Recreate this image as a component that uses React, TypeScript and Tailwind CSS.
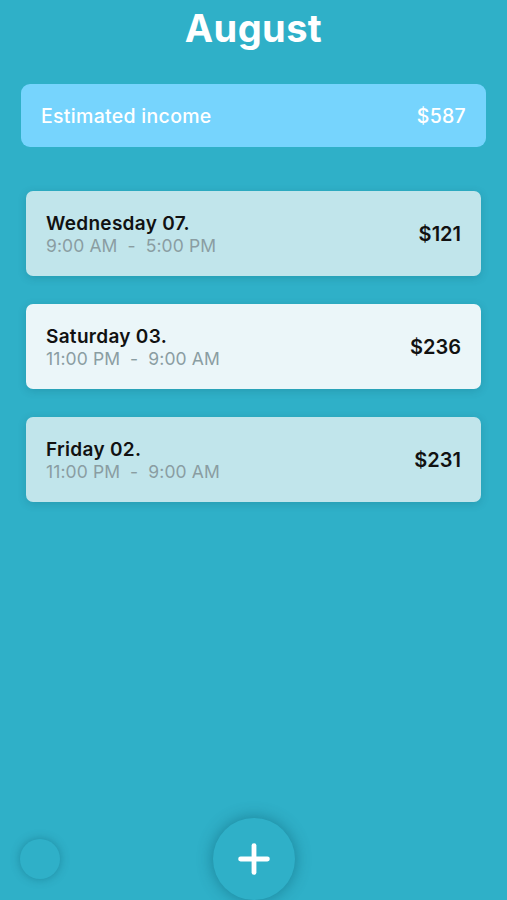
import { Plus } from "lucide-react";

type Shift = {
  id: number;
  day: string;
  start: string;
  end: string;
  amount: number;
  active?: boolean;
};

const shifts: Shift[] = [
  { id: 1, day: "Wednesday 07.", start: "9:00 AM", end: "5:00 PM", amount: 121 },
  { id: 2, day: "Saturday 03.", start: "11:00 PM", end: "9:00 AM", amount: 236, active: true },
  { id: 3, day: "Friday 02.", start: "11:00 PM", end: "9:00 AM", amount: 231 },
];

export default function App() {
  return (
    <div
      className="relative h-[900px] w-full overflow-hidden bg-[#2fb0c8]"
      style={{ fontFamily: "Inter, 'Noto Sans', sans-serif" }}
    >
      {/* Header */}
      <h1 className="pt-[5px] text-center text-[38px] font-bold leading-[46px] tracking-[0.4px] text-white">
        August
      </h1>

      {/* Estimated income */}
      <div className="mx-[21px] mt-[33px] flex h-[63px] items-center justify-between rounded-[9px] bg-[#76d4fd] px-[20px] text-[19.5px] font-medium tracking-[0.3px] text-white">
        <span className="pt-[3px]">Estimated income</span>
        <span className="pt-[3px]">$587</span>
      </div>

      {/* Shift list */}
      <div className="mx-[26px] mt-[44px] flex flex-col gap-[28px]">
        {shifts.map((s) => (
          <div
            key={s.id}
            className={`flex h-[85px] items-center justify-between rounded-[7px] pl-[20px] pr-[20px] shadow-[0_2px_8px_rgba(0,60,80,0.18)] ${
              s.active ? "bg-[#ebf6f9]" : "bg-[#c1e5eb]"
            }`}
          >
            <div className="flex flex-col pt-[2px]">
              <span className="text-[19px] font-semibold leading-[23px] tracking-[0.3px] text-[#111]">{s.day}</span>
              <span className="text-[17.5px] leading-[22px] tracking-[0.1px] text-[#8a9da2]">
                {s.start}&nbsp;&nbsp;-&nbsp;&nbsp;{s.end}
              </span>
            </div>
            <span className="text-[20px] font-semibold text-[#111]">${s.amount}</span>
          </div>
        ))}
      </div>

      {/* Bottom controls */}
      <div className="absolute left-[20px] top-[839px] h-[40px] w-[40px] rounded-full bg-[#2fb0c8] shadow-[0_0_10px_rgba(0,70,90,0.35)]" />
      <button className="absolute left-[213px] top-[818px] flex h-[82px] w-[82px] items-center justify-center rounded-full bg-[#2fb0c8] shadow-[0_0_16px_rgba(0,70,90,0.45)]">
        <Plus className="h-[46px] w-[46px] text-white" strokeWidth={2.5} />
      </button>
    </div>
  );
}
